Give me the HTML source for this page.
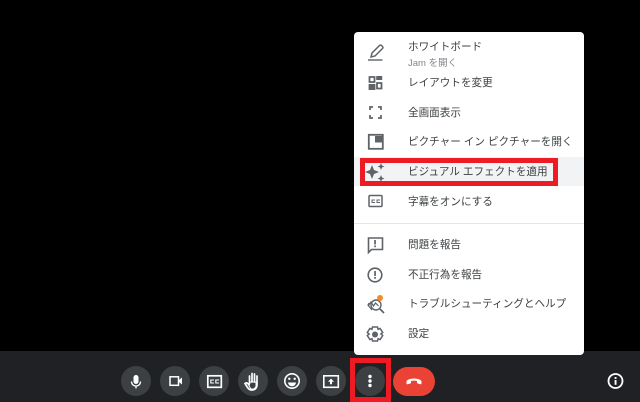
<!DOCTYPE html>
<html lang="ja"><head><meta charset="utf-8"><style>
html,body{margin:0;padding:0;width:640px;height:402px;overflow:hidden;background:#000}
body{position:relative;font-family:"Liberation Sans","Noto Sans CJK JP",sans-serif}
.bar{position:absolute;left:0;top:351px;width:640px;height:51px;background:#202124}
.menu{position:absolute;left:354px;top:32px;width:230px;height:323px;background:#fff;border-radius:4px}
.hl{position:absolute;left:354px;top:157px;width:230px;height:29px;background:#f1f3f4}
.t{position:absolute;left:408px;font-size:10.6px;line-height:14px;color:#3c4043;white-space:nowrap;filter:blur(.35px)}
.s{color:#80868b;font-size:9.5px}
.div{position:absolute;left:354px;top:223px;width:230px;height:1px;background:#e4e5e6}
.box{position:absolute;left:360px;top:158px;width:188px;height:18px;border:5px solid #ed1c24}
.box2{position:absolute;left:350px;top:358px;width:31px;height:34px;border:5px solid #ed1c24}
svg{position:absolute;left:0;top:0}
</style></head><body>
<div class="bar"></div>
<div class="menu"></div>
<div class="hl"></div>
<div class="div"></div>
<div class="t" style="top:40px">ホワイトボード</div>
<div class="t s" style="top:57px">Jam を開く</div>
<div class="t" style="top:76px">レイアウトを変更</div>
<div class="t" style="top:106px">全画面表示</div>
<div class="t" style="top:135px">ピクチャー イン ピクチャーを開く</div>
<div class="t" style="top:165px">ビジュアル エフェクトを適用</div>
<div class="t" style="top:195px">字幕をオンにする</div>
<div class="t" style="top:238px">問題を報告</div>
<div class="t" style="top:268px">不正行為を報告</div>
<div class="t" style="top:297px">トラブルシューティングとヘルプ</div>
<div class="t" style="top:327px">設定</div>
<div class="box"></div>
<div class="box2"></div>
<svg width="640" height="402" viewBox="0 0 640 402">
<!-- menu icons -->
<g fill="none" stroke="#5f6368" stroke-width="1.5">
<path d="M371 57l1-4 7.500-7.500a1.400 1.400 0 0 1 2 0l1 1a1.400 1.400 0 0 1 0 2L375 56z"/>
<path d="M368 60h14.500" stroke-width="1.400"/>
<path d="M369.500 77h5v5h-5zM377 83h4.500v5.500H377z" stroke-width="1.800"/>
<path d="M370 110v-3h3M378 107h3v3M381 115v3h-3M373 118h-3v-3" stroke-width="1.700"/>
<rect x="368.800" y="134.800" width="14" height="14" stroke-width="1.800"/>
<rect x="369" y="195.500" width="13" height="11" rx="1"/>
<path d="M375 200h-3v2.500h3M380 200h-3v2.500h3" stroke-width="1"/>
<path d="M368.500 238h14v11.500h-11l-3 3z" stroke-width="1.600"/>
<circle cx="375" cy="275" r="6.800" stroke-width="1.600"/>
<circle cx="376" cy="305" r="5" stroke-width="1.400"/>
<path d="M380 309l4 4" stroke-width="1.700"/>
<path d="M368 306l3-4 2.500 4 2-3 3 3" stroke-width="1.200"/>
<path d="M369 303l-1 2 4 5" stroke-width="1.200"/>
<path d="M372.500 327h5l.6 2.300 2-.9 2.600 4.100-1.800 1.500 1.800 1.500-2.600 4.100-2-.9-.6 2.300h-5l-.6-2.300-2 .9-2.600-4.100 1.800-1.500-1.800-1.500 2.600-4.100 2 .9z" stroke-width="1.500"/>
</g>
<g fill="#5f6368">
<rect x="376.200" y="76" width="6" height="4"/>
<rect x="368.600" y="84" width="6.800" height="6"/>
<rect x="375" y="136" width="7" height="6.500"/>
<path d="M372 165l2 5 5 2-5 2-2 5-2-5-5-2 5-2zM381 163l1 2.500 2.500 1-2.500 1-1 2.500-1-2.500-2.500-1 2.500-1zM381 175l1 2.500 2.500 1-2.500 1-1 2.500-1-2.500-2.500-1 2.500-1z"/>
<rect x="374.200" y="240" width="1.700" height="4.500"/>
<rect x="374.200" y="245.500" width="1.700" height="1.700"/>
<rect x="374.200" y="271" width="1.700" height="5"/>
<rect x="374.200" y="277" width="1.700" height="1.800"/>
<circle cx="375" cy="334.500" r="3"/>
</g>
<circle cx="380" cy="298" r="3" fill="#f28b29"/>
<!-- toolbar buttons -->
<g fill="#3c4043">
<circle cx="136" cy="381" r="15"/><circle cx="175" cy="381" r="15"/><circle cx="214" cy="381" r="15"/>
<circle cx="253" cy="381" r="15"/><circle cx="292" cy="381" r="15"/><circle cx="331" cy="381" r="15"/><circle cx="370" cy="381" r="15"/>
</g>
<rect x="393" y="367" width="42" height="29" rx="14.500" fill="#ea4335"/>
<!-- mic -->
<rect x="133.500" y="375" width="5" height="9" rx="2.500" fill="#fff"/>
<path d="M131.500 381.500c0 6 9 6 9 0M136 386v2.500" stroke="#fff" stroke-width="1.300" fill="none"/>
<!-- camera -->
<rect x="170" y="376.800" width="8.500" height="8.500" fill="none" stroke="#fff" stroke-width="1.500"/>
<path d="M179 380l3-2.500v7l-3-2.500z" fill="#fff"/>
<!-- cc -->
<rect x="207.800" y="375.800" width="13.500" height="11.500" fill="none" stroke="#fff" stroke-width="1.700"/>
<path d="M214 380h-3.200v3H214M219 380h-3.200v3h3.200" stroke="#fff" stroke-width="1.100" fill="none"/>
<!-- hand -->
<path d="M249.500 376v7M252 373.500v8.500M254.500 374v8M257 376v8.500c0 3.500-2 5.500-5 5.500-2 0-3.500-1-4.500-2.500l-2.500-4c1-1 2-.8 3 .2l1 1.300" stroke="#fff" stroke-width="1.700" fill="none" stroke-linecap="round"/>
<path d="M250 382h6v4.500l-2 2.500h-3l-2-3z" fill="none" stroke="#fff" stroke-width="1"/>
<!-- emoji -->
<circle cx="292" cy="381" r="7.200" fill="none" stroke="#fff" stroke-width="1.600"/>
<circle cx="289.300" cy="378.800" r="1.200" fill="#fff"/><circle cx="294.700" cy="378.800" r="1.200" fill="#fff"/>
<path d="M288 382.500h8c-.5 5-7.500 5-8 0z" fill="#fff"/>
<!-- present -->
<rect x="323.800" y="375.800" width="14.500" height="11.500" fill="none" stroke="#fff" stroke-width="1.600"/>
<path d="M331 378.500l3 3.200h-2v2.500h-2v-2.500h-2z" fill="#fff"/>
<!-- dots -->
<circle cx="370" cy="376.500" r="1.700" fill="#fff"/><circle cx="370" cy="381" r="1.700" fill="#fff"/><circle cx="370" cy="385.500" r="1.700" fill="#fff"/>
<!-- hangup -->
<path d="M406.500 383.500v-2c0-2 5-3 7.500-3s7.500 1 7.500 3v2c0 .5-.5 1-1 .8l-2.800-.8c-.5-.2-.7-.5-.7-1v-1.500c-2-.5-4-.5-6 0v1.500c0 .5-.2.800-.7 1l-2.800.8c-.5.2-1-.3-1-.8z" fill="#fff"/>
<!-- info -->
<circle cx="615.500" cy="381" r="7" fill="none" stroke="#fff" stroke-width="1.800"/>
<rect x="614.600" y="380" width="1.900" height="4.800" fill="#fff"/>
<rect x="614.600" y="377" width="1.900" height="1.900" fill="#fff"/>
</svg>
</body></html>
